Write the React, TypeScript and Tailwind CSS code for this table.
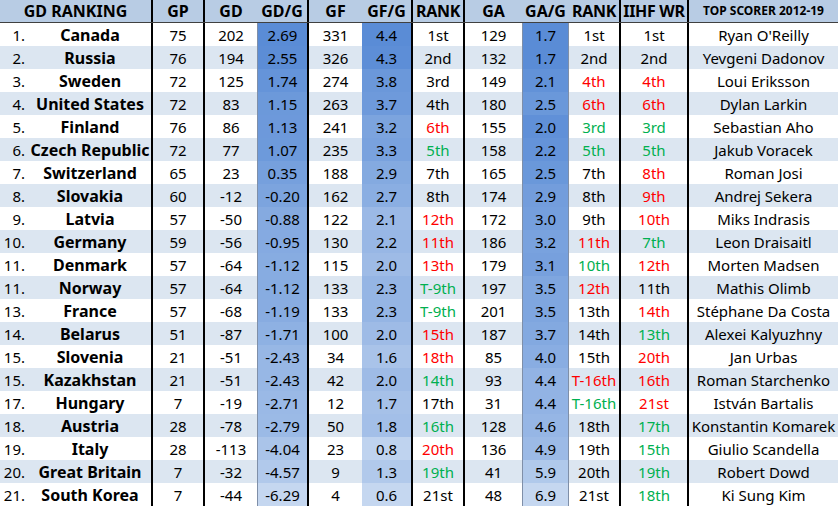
type Row = {
  n: string;
  team: string;
  gp: number;
  gd: number;
  gdg: string;
  gf: number;
  gfg: string;
  rf: string;
  ga: number;
  gag: string;
  ra: string;
  wr: string;
  scorer: string;
};

// r = red, g = green, anything else = black
const rows: [Row, string, string, string][] = [
  [{ n: "1.", team: "Canada", gp: 75, gd: 202, gdg: "2.69", gf: 331, gfg: "4.4", rf: "1st", ga: 129, gag: "1.7", ra: "1st", wr: "1st", scorer: "Ryan O'Reilly" }, "", "", ""],
  [{ n: "2.", team: "Russia", gp: 76, gd: 194, gdg: "2.55", gf: 326, gfg: "4.3", rf: "2nd", ga: 132, gag: "1.7", ra: "2nd", wr: "2nd", scorer: "Yevgeni Dadonov" }, "", "", ""],
  [{ n: "3.", team: "Sweden", gp: 72, gd: 125, gdg: "1.74", gf: 274, gfg: "3.8", rf: "3rd", ga: 149, gag: "2.1", ra: "4th", wr: "4th", scorer: "Loui Eriksson" }, "", "r", "r"],
  [{ n: "4.", team: "United States", gp: 72, gd: 83, gdg: "1.15", gf: 263, gfg: "3.7", rf: "4th", ga: 180, gag: "2.5", ra: "6th", wr: "6th", scorer: "Dylan Larkin" }, "", "r", "r"],
  [{ n: "5.", team: "Finland", gp: 76, gd: 86, gdg: "1.13", gf: 241, gfg: "3.2", rf: "6th", ga: 155, gag: "2.0", ra: "3rd", wr: "3rd", scorer: "Sebastian Aho" }, "r", "g", "g"],
  [{ n: "6.", team: "Czech Republic", gp: 72, gd: 77, gdg: "1.07", gf: 235, gfg: "3.3", rf: "5th", ga: 158, gag: "2.2", ra: "5th", wr: "5th", scorer: "Jakub Voracek" }, "g", "g", "g"],
  [{ n: "7.", team: "Switzerland", gp: 65, gd: 23, gdg: "0.35", gf: 188, gfg: "2.9", rf: "7th", ga: 165, gag: "2.5", ra: "7th", wr: "8th", scorer: "Roman Josi" }, "", "", "r"],
  [{ n: "8.", team: "Slovakia", gp: 60, gd: -12, gdg: "-0.20", gf: 162, gfg: "2.7", rf: "8th", ga: 174, gag: "2.9", ra: "8th", wr: "9th", scorer: "Andrej Sekera" }, "", "", "r"],
  [{ n: "9.", team: "Latvia", gp: 57, gd: -50, gdg: "-0.88", gf: 122, gfg: "2.1", rf: "12th", ga: 172, gag: "3.0", ra: "9th", wr: "10th", scorer: "Miks Indrasis" }, "r", "", "r"],
  [{ n: "10.", team: "Germany", gp: 59, gd: -56, gdg: "-0.95", gf: 130, gfg: "2.2", rf: "11th", ga: 186, gag: "3.2", ra: "11th", wr: "7th", scorer: "Leon Draisaitl" }, "r", "r", "g"],
  [{ n: "11.", team: "Denmark", gp: 57, gd: -64, gdg: "-1.12", gf: 115, gfg: "2.0", rf: "13th", ga: 179, gag: "3.1", ra: "10th", wr: "12th", scorer: "Morten Madsen" }, "r", "g", "r"],
  [{ n: "11.", team: "Norway", gp: 57, gd: -64, gdg: "-1.12", gf: 133, gfg: "2.3", rf: "T-9th", ga: 197, gag: "3.5", ra: "12th", wr: "11th", scorer: "Mathis Olimb" }, "g", "r", ""],
  [{ n: "13.", team: "France", gp: 57, gd: -68, gdg: "-1.19", gf: 133, gfg: "2.3", rf: "T-9th", ga: 201, gag: "3.5", ra: "13th", wr: "14th", scorer: "Stéphane Da Costa" }, "g", "", "r"],
  [{ n: "14.", team: "Belarus", gp: 51, gd: -87, gdg: "-1.71", gf: 100, gfg: "2.0", rf: "15th", ga: 187, gag: "3.7", ra: "14th", wr: "13th", scorer: "Alexei Kalyuzhny" }, "r", "", "g"],
  [{ n: "15.", team: "Slovenia", gp: 21, gd: -51, gdg: "-2.43", gf: 34, gfg: "1.6", rf: "18th", ga: 85, gag: "4.0", ra: "15th", wr: "20th", scorer: "Jan Urbas" }, "r", "", "r"],
  [{ n: "15.", team: "Kazakhstan", gp: 21, gd: -51, gdg: "-2.43", gf: 42, gfg: "2.0", rf: "14th", ga: 93, gag: "4.4", ra: "T-16th", wr: "16th", scorer: "Roman Starchenko" }, "g", "r", "r"],
  [{ n: "17.", team: "Hungary", gp: 7, gd: -19, gdg: "-2.71", gf: 12, gfg: "1.7", rf: "17th", ga: 31, gag: "4.4", ra: "T-16th", wr: "21st", scorer: "István Bartalis" }, "", "g", "r"],
  [{ n: "18.", team: "Austria", gp: 28, gd: -78, gdg: "-2.79", gf: 50, gfg: "1.8", rf: "16th", ga: 128, gag: "4.6", ra: "18th", wr: "17th", scorer: "Konstantin Komarek" }, "g", "", "g"],
  [{ n: "19.", team: "Italy", gp: 28, gd: -113, gdg: "-4.04", gf: 23, gfg: "0.8", rf: "20th", ga: 136, gag: "4.9", ra: "19th", wr: "15th", scorer: "Giulio Scandella" }, "r", "", "g"],
  [{ n: "20.", team: "Great Britain", gp: 7, gd: -32, gdg: "-4.57", gf: 9, gfg: "1.3", rf: "19th", ga: 41, gag: "5.9", ra: "20th", wr: "19th", scorer: "Robert Dowd" }, "g", "", "g"],
  [{ n: "21.", team: "South Korea", gp: 7, gd: -44, gdg: "-6.29", gf: 4, gfg: "0.6", rf: "21st", ga: 48, gag: "6.9", ra: "21st", wr: "18th", scorer: "Ki Sung Kim" }, "", "", "g"],
];

const dark = [90, 140, 214];
const light = [197, 215, 240];

function scale(v: number, min: number, max: number, invert = false) {
  let t = (v - min) / (max - min);
  if (invert) t = 1 - t;
  const c = light.map((l, i) => Math.round(l + (dark[i] - l) * t));
  return `rgb(${c[0]},${c[1]},${c[2]})`;
}

function tone(c: string) {
  if (c === "r") return "text-[#ff0000]";
  if (c === "g") return "text-[#00b050]";
  return "text-black";
}

const cols =
  "grid grid-cols-[153px_52px_52px_52px_53px_51px_52px_57px_47px_52px_68px_149px]";
const thick = "border-r-2 border-black";
const blue = "border-x border-[#7f8fa8]";

export default function App() {
  return (
    <div className="w-[838px] h-[507px] bg-white text-[15px] leading-[22px] text-black font-['Noto_Sans',sans-serif] overflow-hidden">
      <div className={`${cols} h-[23px] bg-[#b8cce4] border-b border-[#404040] font-bold text-center`}>
        <div className={`${thick} text-[16px] leading-[22px]`}>GD RANKING</div>
        <div className={`${thick} text-[16px] leading-[22px]`}>GP</div>
        <div className="text-[16px] leading-[22px]">GD</div>
        <div className={`${thick} text-[16px] leading-[22px]`}>GD/G</div>
        <div className="text-[16px] leading-[22px]">GF</div>
        <div className={`${thick} text-[16px] leading-[22px]`}>GF/G</div>
        <div className={`${thick} text-[16px] leading-[22px] tracking-[-0.3px]`}>RANK</div>
        <div className="text-[16px] leading-[22px]">GA</div>
        <div className="text-[16px] leading-[22px]">GA/G</div>
        <div className={`${thick} text-[16px] leading-[22px] tracking-[-0.3px]`}>RANK</div>
        <div className={`${thick} text-[16px] leading-[22px] tracking-[-0.3px]`}>IIHF WR</div>
        <div className="text-[12px] leading-[22px]">TOP SCORER 2012-19</div>
      </div>
      {rows.map(([r, cf, ca, cw], i) => {
        const stripe = i % 2 === 1 ? "bg-[#dce6f1]" : "bg-white";
        return (
          <div key={i} className={`${cols} h-[23px] text-center ${stripe}`}>
            <div className={`${thick} flex pt-[1px]`}>
              <span className="w-[28px] pr-[3px] text-right">{r.n}</span>
              <span className="flex-1 pl-[1px] font-bold text-[16px] whitespace-nowrap">{r.team}</span>
            </div>
            <div className={`${thick} pt-[1px]`}>{r.gp}</div>
            <div className="pt-[1px]">{r.gd}</div>
            <div className={`${thick} border-l border-l-[#7f8fa8] pt-[1px]`} style={{ backgroundColor: scale(parseFloat(r.gdg), -6.29, 2.69) }}>
              {r.gdg}
            </div>
            <div className="pt-[1px]">{r.gf}</div>
            <div className={`${thick} pt-[1px]`} style={{ backgroundColor: scale(parseFloat(r.gfg), 0.6, 4.4) }}>
              {r.gfg}
            </div>
            <div className={`${thick} ${tone(cf)} pt-[1px]`}>{r.rf}</div>
            <div className="pt-[1px]">{r.ga}</div>
            <div className={`${blue} pt-[1px]`} style={{ backgroundColor: scale(parseFloat(r.gag), 1.7, 6.9, true) }}>
              {r.gag}
            </div>
            <div className={`${thick} ${tone(ca)} whitespace-nowrap pt-[1px]`}>{r.ra}</div>
            <div className={`${thick} ${tone(cw)} pt-[1px]`}>{r.wr}</div>
            <div className="whitespace-nowrap pt-[1px]">{r.scorer}</div>
          </div>
        );
      })}
    </div>
  );
}
